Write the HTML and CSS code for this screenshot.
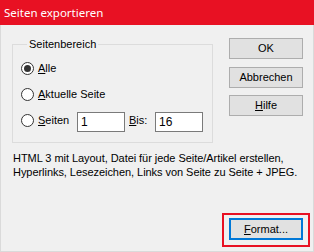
FILE: index.html
```html
<!DOCTYPE html>
<html>
<head>
<meta charset="utf-8">
<link rel="stylesheet" href="styles.css">
</head>
<body>
<div class="window">
  <div class="titlebar">Seiten exportieren</div>
  <div class="content">
    <div class="top">
      <fieldset class="group">
        <legend>Seitenbereich</legend>
        <div class="row">
          <span class="radio checked"></span>
          <span class="label"><u>A</u>lle</span>
        </div>
        <div class="row">
          <span class="radio"></span>
          <span class="label"><u>A</u>ktuelle Seite</span>
        </div>
        <div class="row row-pages">
          <span class="radio"></span>
          <span class="label label-pages"><u>S</u>eiten</span>
          <span class="field">1</span>
          <span class="label label-bis"><u>B</u>is:</span>
          <span class="field">16</span>
        </div>
      </fieldset>
      <div class="buttons">
        <div class="btn">OK</div>
        <div class="btn btn-2">Abbrechen</div>
        <div class="btn btn-3"><u>H</u>ilfe</div>
      </div>
    </div>
    <p class="desc">HTML 3 mit Layout, Datei für jede Seite/Artikel erstellen,<br>Hyperlinks, Lesezeichen, Links von Seite zu Seite + JPEG.</p>
    <div class="footer">
      <div class="format-wrap">
        <div class="btn btn-default"><u>F</u>ormat...</div>
        <div class="highlight"></div>
      </div>
    </div>
  </div>
</div>
</body>
</html>
```

FILE: styles.css
```css
html, body {
  margin: 0;
  padding: 0;
  background: #f0f0f0;
}

.window {
  width: 314px;
  height: 252px;
  box-sizing: border-box;
  border: 1px solid #dadada;
  border-top: none;
  background: #f0f0f0;
  font-family: "Liberation Sans", Arial, sans-serif;
  font-size: 11px;
  color: #000;
  display: flex;
  flex-direction: column;
}

.titlebar {
  height: 25px;
  margin: 0 -1px;
  background: #e81123;
  color: #fff;
  font-family: "Noto Sans", "Open Sans", sans-serif;
  font-size: 11.5px;
  line-height: 25px;
  padding-left: 4px;
}

.content {
  padding: 13px 10px 0 11px;
  display: flex;
  flex-direction: column;
}

.top {
  display: flex;
  gap: 16px;
}

.group {
  width: 201px;
  box-sizing: border-box;
  margin: 0;
  padding: 4px 0 9px 8px;
  border: 1px solid #dcdcdc;
}

.group legend {
  margin-left: 6px;
  padding: 0 2px;
  line-height: 13px;
}

.row {
  display: flex;
  align-items: center;
  height: 26px;
}

.radio {
  width: 13px;
  height: 13px;
  box-sizing: border-box;
  border: 1px solid #333;
  border-radius: 50%;
  background: #fff;
  display: flex;
  align-items: center;
  justify-content: center;
  flex: none;
}

.radio.checked::after {
  content: "";
  width: 7px;
  height: 7px;
  border-radius: 50%;
  background: #333;
}

.label {
  margin-left: 4px;
}

.label-pages {
  width: 39px;
}

.field {
  width: 48px;
  height: 20px;
  box-sizing: border-box;
  border: 1px solid #7a7a7a;
  background: #fff;
  padding-left: 3px;
  line-height: 18px;
  margin-top: 3px;
  font-size: 12px;
}

.label-bis {
  width: 26px;
}

.buttons {
  display: flex;
  flex-direction: column;
  width: 74px;
}

.btn {
  height: 21px;
  box-sizing: border-box;
  border: 1px solid #adadad;
  background: #e1e1e1;
  text-align: center;
  line-height: 19px;
}

.btn-2 {
  margin-top: 8px;
}

.btn-3 {
  margin-top: 7px;
}

.desc {
  margin: 8px 0 0 1px;
  line-height: 14px;
  letter-spacing: -0.05px;
}

.footer {
  display: flex;
  justify-content: flex-end;
  margin-top: 39px;
}

.format-wrap {
  position: relative;
  width: 74px;
}

.btn-default {
  height: 22px;
  border: 2px solid #0078d7;
  line-height: 18px;
}

.highlight {
  position: absolute;
  top: -5px;
  left: -7px;
  right: -7px;
  bottom: -7px;
  border: 2px solid #e81123;
}
```
